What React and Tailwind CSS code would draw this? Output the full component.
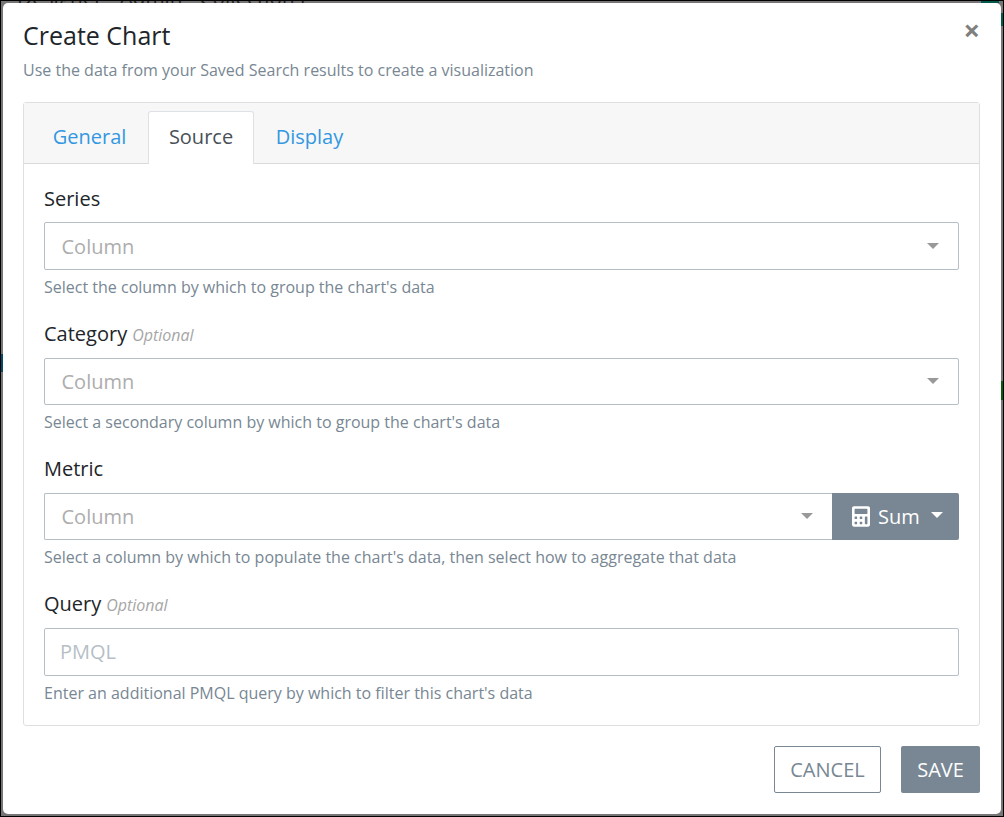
import { FaCalculator } from "react-icons/fa";

function Caret({ className = "" }) {
  return (
    <svg className={`h-[6px] w-3 shrink-0 ${className}`} viewBox="0 0 12 6" fill="currentColor">
      <path d="M0 0h12L6 6z" />
    </svg>
  );
}

function Label({ children, optional }) {
  return (
    <label className="block h-[33px] text-[20px] leading-[30px] text-[#212529]">
      {children}
      {optional && <span className="ml-[5px] text-[16px] text-[#a6a6a6] italic">Optional</span>}
    </label>
  );
}

function Select({ className = "", textClass = "" }) {
  return (
    <div className={`flex flex-1 items-center justify-between rounded-[2px] border border-[#b6bfc6] pr-[19px] pl-[16.5px] text-[20px] text-[#adadad] ${className}`}>
      <span className={textClass}>Column</span>
      <Caret className="mb-px text-[#999999]" />
    </div>
  );
}

function Help({ children }) {
  return <p className="mt-[5px] text-[16px] leading-6 text-[#788793]">{children}</p>;
}

function Backdrop() {
  return (
    <div aria-hidden="true" className="absolute inset-0 overflow-hidden border border-black bg-[#777575]">
      <div className="absolute -top-[19px] left-[16px] flex gap-[17px] text-[20.7px] leading-[30px] text-[#222222]">
        <span>Designer</span>
        <span>Admin</span>
        <span>Collections</span>
      </div>
      <div className="absolute top-0 left-[980px] h-[2px] w-[18px] bg-[#00594b]" />
      <div className="absolute top-[12px] right-0 h-[13px] w-[2px] bg-[#00594b]" />
      <div className="absolute top-[353px] left-0 h-[18px] w-[2px] bg-[#064868]" />
      <div className="absolute top-[380px] right-0 h-[19px] w-[2px] bg-[#075c0b]" />
    </div>
  );
}

export default function App() {
  return (
    <div className="relative h-[817px] w-[1004px] overflow-hidden p-[3px] font-['Open_Sans',sans-serif]">
      <Backdrop />
      <div className="relative flex h-[811px] w-[998px] flex-col rounded-[5px] bg-white pr-[21px] pl-5">
        <header className="flex h-[99px] shrink-0 justify-between">
          <div>
            <h1 className="mt-[13px] text-[25px] leading-[38px] text-[#212529]">Create Chart</h1>
            <p className="mt-[4px] text-[16px] leading-6 text-[#788793]">
              Use the data from your Saved Search results to create a visualization
            </p>
          </div>
          <button aria-label="Close" className="mt-[12px] h-[30px] text-[29px] leading-[30px] font-bold text-[#7f7f7f]">×</button>
        </header>

        <section className="h-[624px] shrink-0 rounded-[3px] border border-[#dfdfdf]">
          <nav className="flex h-[61px] items-end border-b border-[#d9dadb] bg-[#f7f7f7] pl-2 text-[20px] leading-[30px] text-[#3397e1]">
            <button className="h-[53px] w-[116px] pr-px">General</button>
            <button className="-mb-px h-[53px] w-[106px] rounded-t-[3px] border border-b-0 border-[#dee2e6] bg-white pb-[2px] text-[#495057]">Source</button>
            <button className="h-[53px] w-[111px]">Display</button>
          </nav>
          <div className="px-5 pt-[20px]">
            <div className="h-[135px]">
              <Label>Series</Label>
              <div className="mt-[5px] flex h-[48px]"><Select textClass="pt-[2px]" /></div>
              <Help>Select the column by which to group the chart's data</Help>
            </div>
            <div className="h-[135px]">
              <Label optional>Category</Label>
              <div className="mt-[6px] flex h-[47px]"><Select /></div>
              <Help>Select a secondary column by which to group the chart's data</Help>
            </div>
            <div className="h-[135px]">
              <Label>Metric</Label>
              <div className="mt-[6px] flex h-[47px]">
                <Select className="rounded-r-none border-r-0" />
                <button className="flex w-[127px] items-center rounded-r-[2px] bg-[#788793] pl-5 text-[20px] text-white">
                  <FaCalculator className="h-[21px] w-[18px]" />
                  <span className="ml-2">Sum</span>
                  <Caret className="mb-[3px] ml-[11px]" />
                </button>
              </div>
              <Help>Select a column by which to populate the chart's data, then select how to aggregate that data</Help>
            </div>
            <div>
              <Label optional>Query</Label>
              <input
                className="mt-[6px] block h-[48px] w-full rounded-[2px] border border-[#b6bfc6] px-[15px] pb-[2px] text-[20px] placeholder:text-[#b6bfc6]"
                placeholder="PMQL"
              />
              <Help>Enter an additional PMQL query by which to filter this chart's data</Help>
            </div>
          </div>
        </section>

        <footer className="mt-5 flex justify-end gap-5 text-[20px]">
          <button className="h-[47px] w-[107px] rounded-[2px] border border-[#788793] text-[#788793]">CANCEL</button>
          <button className="h-[47px] w-[79px] rounded-[2px] bg-[#788793] text-white">SAVE</button>
        </footer>
      </div>
    </div>
  );
}
